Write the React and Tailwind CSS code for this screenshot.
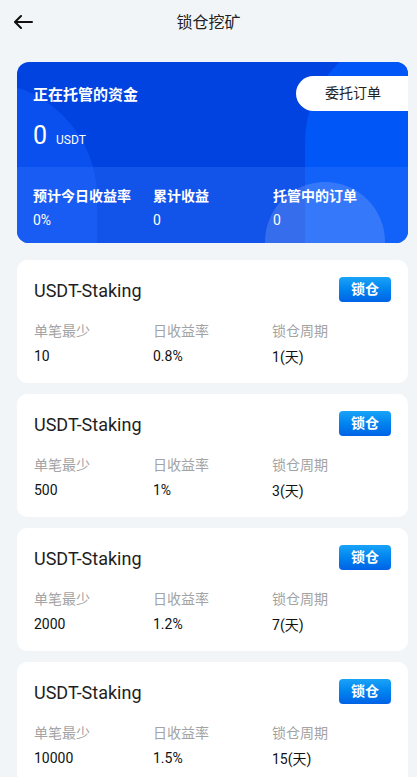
import React from "react";

const font = { fontFamily: 'Roboto, "Noto Sans CJK SC", sans-serif' };

const items = [
  { min: "10", rate: "0.8%", days: "1" },
  { min: "500", rate: "1%", days: "3" },
  { min: "2000", rate: "1.2%", days: "7" },
  { min: "10000", rate: "1.5%", days: "15" },
];

function StakeCard({ min, rate, days }) {
  return (
    <div className="bg-white rounded-[10px] h-[123px] pt-[17px] pl-[17px] pr-[17px] shrink-0">
      <div className="flex items-center justify-between h-[25px]">
        <div className="text-[18px] leading-[24px] text-[#1e1e1e] pt-[3px]">USDT-Staking</div>
        <div className="w-[52px] h-[25px] rounded-[4px] bg-gradient-to-b from-[#19a3f7] to-[#0062e6] text-white text-[14px] font-bold flex items-center justify-center">
          锁仓
        </div>
      </div>
      <div className="grid grid-cols-[119px_119px_1fr] mt-[19px]">
        <div className="text-[14px] leading-[20px] text-[#a3a3a3]">单笔最少</div>
        <div className="text-[14px] leading-[20px] text-[#a3a3a3]">日收益率</div>
        <div className="text-[14px] leading-[20px] text-[#a3a3a3]">锁仓周期</div>
        <div className="text-[14px] leading-[20px] text-[#111] mt-[5px]">{min}</div>
        <div className="text-[14px] leading-[20px] text-[#111] mt-[5px]">{rate}</div>
        <div className="text-[14px] leading-[20px] text-[#111] mt-[6px]">{days}(天)</div>
      </div>
    </div>
  );
}

export default function App() {
  return (
    <div className="w-full min-h-screen bg-[#f2f5f7] overflow-hidden" style={font}>
      <div className="h-[44px] flex items-center relative">
        <div className="pl-[14px] w-[60px] flex items-center">
          <svg width="19" height="14" viewBox="0 0 19 14" fill="none" stroke="#111" strokeWidth="2" strokeLinecap="round" strokeLinejoin="round">
            <path d="M18 7H1.5" />
            <path d="M7 1L1 7l6 6" />
          </svg>
        </div>
        <div className="flex-1 text-center text-[16px] text-[#222] pt-[2px]">锁仓挖矿</div>
        <div className="w-[60px]" />
      </div>

      <div className="ml-[17px] mr-[9px] mt-[18px] flex flex-col gap-[17px]">
        <div className="relative h-[181px] rounded-[12px] overflow-hidden bg-[#0043e0]">
          <div className="absolute left-[-150px] top-[20px] w-[230px] h-[300px] rounded-full bg-[#0a50ee]" />
          <div className="absolute left-[288px] top-[-30px] w-[220px] h-[400px] rounded-full bg-[#0056f6]" />
          <div className="absolute left-[248px] top-[120px] w-[120px] h-[120px] rounded-full bg-white/20" />
          <div className="relative h-[105px]">
            <div className="absolute left-[16px] top-[23px] text-white text-[15px] leading-[20px] font-bold">正在托管的资金</div>
            <div className="absolute left-[16px] top-[60px] flex items-baseline text-white">
              <span className="text-[25px] leading-[28px]">0</span>
              <span className="text-[12px] ml-[9px]">USDT</span>
            </div>
            <div className="absolute right-0 top-[14px] w-[112px] h-[35px] bg-white rounded-l-full flex items-center justify-center text-[14px] text-[#222] pl-[2px]">
              委托订单
            </div>
          </div>
          <div className="relative h-[76px] bg-[#3c7cff]/30 grid grid-cols-[120px_120px_1fr] pl-[16px] pt-[19px]">
            <div className="flex flex-col text-white">
              <span className="text-[14px] leading-[20px] font-bold">预计今日收益率</span>
              <span className="text-[14px] leading-[20px] mt-[4px]">0%</span>
            </div>
            <div className="flex flex-col text-white">
              <span className="text-[14px] leading-[20px] font-bold">累计收益</span>
              <span className="text-[14px] leading-[20px] mt-[4px]">0</span>
            </div>
            <div className="flex flex-col text-white">
              <span className="text-[14px] leading-[20px] font-bold">托管中的订单</span>
              <span className="text-[14px] leading-[20px] mt-[4px]">0</span>
            </div>
          </div>
        </div>

        <div className="flex flex-col gap-[11px]">
          {items.map((it, i) => (
            <StakeCard key={i} {...it} />
          ))}
        </div>
      </div>
    </div>
  );
}
